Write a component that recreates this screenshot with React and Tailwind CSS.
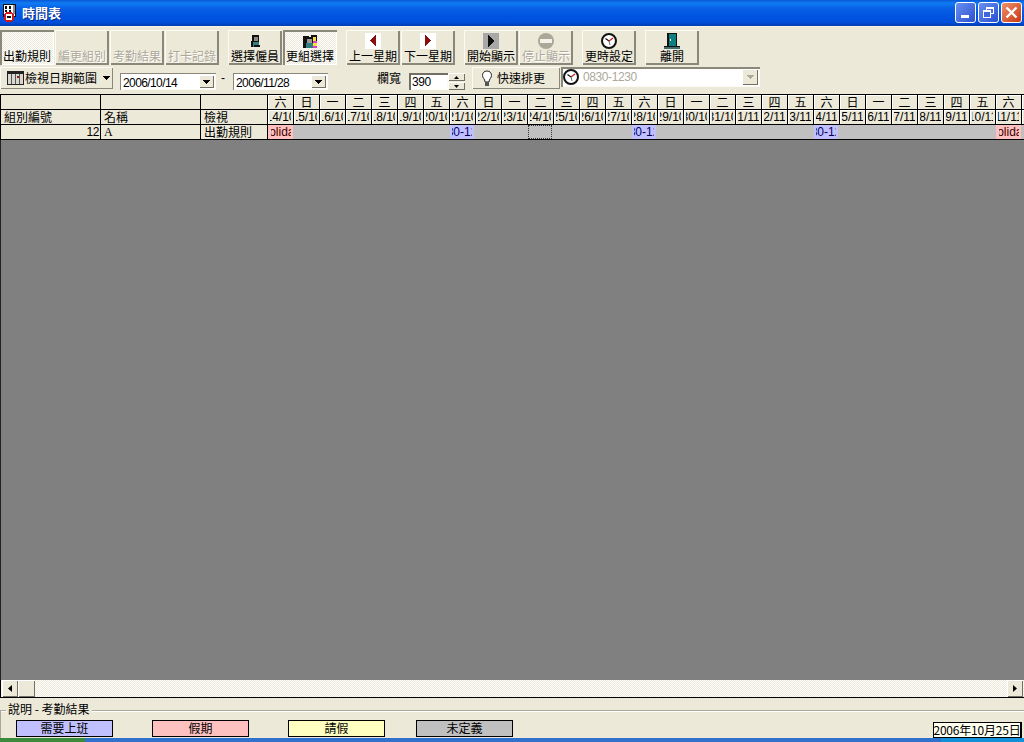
const latin = "font-['Liberation_Sans','Noto_Sans_CJK_TC',sans-serif]";

function AppIcon() {
  return (
    <svg width="17" height="19" viewBox="0 0 17 19" className="mr-[4px] shrink-0" shapeRendering="crispEdges">
      <rect x="2.5" y="0.5" width="12" height="12" fill="#fff" stroke="#111" />
      <rect x="4" y="2" width="2" height="3" fill="#111" />
      <rect x="8" y="2" width="2" height="3" fill="#111" />
      <rect x="4" y="6" width="2" height="2" fill="#111" />
      <rect x="8" y="6" width="2" height="2" fill="#111" />
      <rect x="12" y="1" width="2" height="9" fill="#8a8aa0" />
      <circle cx="8" cy="13" r="4.5" fill="#fff" stroke="#d01818" strokeWidth="2" />
      <rect x="6" y="12" width="4" height="2" fill="#111" />
    </svg>
  );
}
function Person() {
  return (
    <svg width="9" height="12" viewBox="0 0 9 12" shapeRendering="crispEdges">
      <rect x="1" y="0" width="7" height="7" fill="#111" />
      <rect x="3" y="2" width="4" height="4" fill="#8a8a80" />
      <rect x="1" y="7" width="7" height="5" fill="#2f7f7f" />
      <rect x="0" y="6" width="2" height="6" fill="#111" />
      <rect x="3" y="10" width="6" height="2" fill="#111" />
    </svg>
  );
}
function Group() {
  return (
    <svg width="14" height="13" viewBox="0 0 14 13" shapeRendering="crispEdges">
      <rect x="0" y="1" width="6" height="12" fill="#111" />
      <rect x="8" y="0" width="6" height="6" fill="#111" />
      <rect x="9" y="2" width="4" height="4" fill="#f4e040" />
      <rect x="8" y="6" width="6" height="7" fill="#e040c0" />
      <rect x="3" y="2" width="7" height="6" fill="#111" />
      <rect x="4" y="4" width="5" height="4" fill="#9a9a90" />
      <rect x="3" y="8" width="7" height="5" fill="#2f7f7f" />
      <rect x="10" y="8" width="4" height="3" fill="#f4e040" />
    </svg>
  );
}
function ArrowBox({ dir }) {
  return (
    <svg width="16" height="16" viewBox="0 0 16 16" shapeRendering="crispEdges">
      <rect width="16" height="16" fill="#fff" />
      <polygon points={dir === "l" ? "11,2 11,13 5,7.5" : "5,2 5,13 11,7.5"} fill="#8a0f0f" />
    </svg>
  );
}
function Play() {
  return (
    <svg width="16" height="16" viewBox="0 0 16 16" shapeRendering="crispEdges">
      <rect width="16" height="16" fill="#a8a8a8" />
      <polygon points="5,2 5,14 11,8" fill="#111" />
    </svg>
  );
}
function Stop() {
  return (
    <svg width="16" height="16" viewBox="0 0 16 16">
      <circle cx="8" cy="8" r="8" fill="#aca899" />
      <rect x="2" y="6" width="12" height="4" fill="#f4f2e8" />
    </svg>
  );
}
function Clock() {
  return (
    <svg width="16" height="16" viewBox="0 0 16 16">
      <circle cx="8" cy="8" r="7" fill="#fff" stroke="#111" strokeWidth="2" />
      <path d="M8 8 L4.5 5.5" stroke="#111" strokeWidth="1.2" />
      <path d="M8 8 L12 5" stroke="#d01818" strokeWidth="1.2" />
      <path d="M8 8 L9 12" stroke="#666" strokeWidth="1" />
    </svg>
  );
}
function Door() {
  return (
    <svg width="16" height="16" viewBox="0 0 16 16" shapeRendering="crispEdges">
      <rect x="3" y="0" width="10" height="13" fill="#111" />
      <rect x="5" y="1" width="7" height="12" fill="#0f7f7f" />
      <rect x="6" y="6" width="1" height="2" fill="#fff" />
      <rect x="0" y="13" width="16" height="3" fill="#3f6f6f" />
      <rect x="0" y="13" width="16" height="1" fill="#111" />
    </svg>
  );
}
function Bulb() {
  return (
    <svg width="12" height="17" viewBox="0 0 12 17">
      <path d="M6 1 C3 1 1.5 3 1.5 5.5 C1.5 8 4 9 4 12 H8 C8 9 10.5 8 10.5 5.5 C10.5 3 9 1 6 1 Z" fill="#fff" stroke="#222" />
      <rect x="4" y="12" width="4" height="4" fill="#555" />
    </svg>
  );
}
function Calendar() {
  return (
    <svg width="17" height="14" viewBox="0 0 17 14" shapeRendering="crispEdges">
      <rect x="0.5" y="0.5" width="16" height="13" fill="#d8d8d0" stroke="#222" />
      <rect x="1" y="1" width="15" height="2" fill="#222" />
      <rect x="4" y="3" width="1" height="10" fill="#555" />
      <rect x="8" y="3" width="1" height="10" fill="#555" />
      <rect x="12" y="3" width="1" height="10" fill="#555" />
      <rect x="10" y="5" width="2" height="2" fill="#a01818" />
    </svg>
  );
}
function Caret({ color = "#000" }) {
  return (
    <svg width="7" height="4" viewBox="0 0 7 4" shapeRendering="crispEdges">
      <polygon points="0,0 7,0 3.5,4" fill={color} />
    </svg>
  );
}

function ToolButton({ label, icon, active, disabled, w = "w-[54px]" }) {
  const face = active
    ? "shadow-[inset_2px_2px_0_#8a887a,inset_-1px_-1px_0_#fff] bg-[repeating-conic-gradient(#ffffff_0_25%,#ece9d8_0_50%)] bg-[length:2px_2px]"
    : "shadow-[inset_1px_1px_0_#fbfaf4,inset_-2px_-2px_0_#8a887a]";
  const text = disabled ? "text-[#aca899] [text-shadow:1px_1px_0_#fff]" : "text-black";
  return (
    <div className={`${w} h-[35px] shrink-0 flex flex-col items-center justify-end pb-[2px] ${face}`}>
      {icon && <div className="h-[16px] flex items-center justify-center">{icon}</div>}
      <span className={`text-[12px] leading-[14px] whitespace-nowrap ${text}`}>{label}</span>
    </div>
  );
}

function DateCombo({ value, w }) {
  return (
    <div className={`${w} h-[17px] flex items-stretch bg-white shadow-[inset_1px_1px_0_#8a887a,inset_-1px_-1px_0_#fbfaf4] p-[2px]`}>
      <span className={`${latin} flex-1 pl-[1px] pt-[1px] text-[12px] tracking-[-0.6px] leading-[14px] text-black`}>{value}</span>
      <div className="w-[15px] bg-[#ece9d8] shadow-[inset_1px_1px_0_#fff,inset_-1px_-1px_0_#716f64] flex items-center justify-center">
        <Caret />
      </div>
    </div>
  );
}

const weekdays = ["六", "日", "一", "二", "三", "四", "五"];
const dates = [];
for (let d = 14; d <= 31; d++) dates.push(`${d}/10`);
for (let d = 1; d <= 11; d++) dates.push(`${d}/11`);

const rowCells = {
  0: { bg: "bg-[#ffc0c0]", text: "Holiday", color: "text-[#400000]" },
  7: { bg: "bg-[#c0c0ff]", text: "0830-1230", color: "text-[#000060]" },
  14: { bg: "bg-[#c0c0ff]", text: "0830-1230", color: "text-[#000060]" },
  21: { bg: "bg-[#c0c0ff]", text: "0830-1230", color: "text-[#000060]" },
  28: { bg: "bg-[#ffc0c0]", text: "Holiday", color: "text-[#400000]" },
};

const cell = "h-[15px] border-r border-b border-black bg-[#ece9d8] text-[12px] leading-[14px] text-black overflow-hidden whitespace-nowrap";
const bevel = "shadow-[inset_1px_1px_0_#fff]";

function Legend({ label, bg, ml }) {
  return (
    <div className={`${ml} w-[97px] h-[17px] border border-black ${bg} flex justify-center text-[12px] leading-[13px] text-black`}>
      {label}
    </div>
  );
}

export default function App() {
  return (
    <div className="w-[1024px] h-[742px] overflow-hidden flex flex-col bg-[#ece9d8] font-['Noto_Sans_CJK_TC','Liberation_Sans',sans-serif]">
      {/* Title bar */}
      <div className="h-[26px] shrink-0 flex items-center pl-[1px] pr-[2px] bg-[linear-gradient(180deg,#0a57d8_0%,#0f7cf2_12%,#0a62e8_30%,#0053e0_65%,#0050dc_85%,#003cb0_100%)]">
        <AppIcon />
        <span className="text-[13px] font-bold text-white leading-[16px] [text-shadow:1px_1px_0_#0a2a80]">時間表</span>
        <div className="ml-auto -mt-[1px] flex gap-[2px]">
          <div className="w-[21px] h-[21px] rounded-[3px] border border-white bg-[linear-gradient(135deg,#6a90f0,#2a50d0)] flex items-end pl-[5px] pb-[4px]">
            <div className="w-[8px] h-[3px] bg-white" />
          </div>
          <div className="w-[21px] h-[21px] rounded-[3px] border border-white bg-[linear-gradient(135deg,#6a90f0,#2a50d0)] relative">
            <div className="absolute left-[7px] top-[4px] w-[8px] h-[7px] border border-white border-t-2" />
            <div className="absolute left-[4px] top-[7px] w-[8px] h-[8px] border border-white border-t-2 bg-[#3f66dc]" />
          </div>
          <div className="w-[21px] h-[21px] rounded-[3px] border border-white bg-[linear-gradient(135deg,#f0906a,#c83a14)] flex items-center justify-center">
            <svg width="13" height="13" viewBox="0 0 13 13"><path d="M1.5 1.5 L11.5 11.5 M11.5 1.5 L1.5 11.5" stroke="#fff" strokeWidth="2.4" /></svg>
          </div>
        </div>
      </div>

      {/* Toolbar */}
      <div className="h-[68px] shrink-0 pt-[3px] flex flex-col border-t border-[#f6f4ea]">
        <div className="flex">
          <div className="flex gap-[1px]">
            <ToolButton label="出勤規則" active />
            <ToolButton label="編更組別" disabled />
            <ToolButton label="考勤結果" disabled />
            <ToolButton label="打卡記錄" disabled />
          </div>
          <div className="flex gap-[1px] ml-[9px]">
            <ToolButton label="選擇僱員" icon={<Person />} />
            <ToolButton label="更組選擇" icon={<Group />} active />
          </div>
          <div className="flex gap-[1px] ml-[9px]">
            <ToolButton label="上一星期" icon={<ArrowBox dir="l" />} />
            <ToolButton label="下一星期" icon={<ArrowBox dir="r" />} />
          </div>
          <div className="flex gap-[1px] ml-[9px]">
            <ToolButton label="開始顯示" icon={<Play />} />
            <ToolButton label="停止顯示" icon={<Stop />} disabled />
          </div>
          <div className="ml-[9px]">
            <ToolButton label="更時設定" icon={<Clock />} />
          </div>
          <div className="ml-[9px]">
            <ToolButton label="離開" icon={<Door />} />
          </div>
        </div>
        <div className="flex items-start mt-[2px]">
          <div className="w-[113px] h-[22px] flex items-center pl-[7px] shadow-[inset_1px_1px_0_#fbfaf4,inset_-1px_-1px_0_#8a887a]">
            <Calendar />
            <span className="ml-[1px] text-[12px] leading-[14px] text-black whitespace-nowrap">檢視日期範圍</span>
            <span className="ml-[6px] flex"><Caret /></span>
          </div>
          <div className="ml-[7px] mt-[6px]"><DateCombo value="2006/10/14" w="w-[96px]" /></div>
          <span className={`${latin} ml-[5px] mt-[4px] w-[12px] text-[12px] leading-[14px] text-black`}>-</span>
          <div className="mt-[6px]"><DateCombo value="2006/11/28" w="w-[95px]" /></div>
          <span className="ml-[49px] mt-[4px] text-[12px] leading-[14px] text-black whitespace-nowrap">欄寬</span>
          <div className={`${latin} ml-[8px] mt-[6px] w-[39px] h-[17px] bg-white shadow-[inset_2px_2px_0_#716f64,inset_-1px_-1px_0_#fbfaf4] pl-[3px] pt-[2px] text-[12px] tracking-[-0.4px] leading-[14px] text-black`}>390</div>
          <div className="mt-[6px] w-[17px] h-[17px] flex flex-col gap-[1px]">
            <div className="h-[8px] shadow-[inset_1px_1px_0_#fff,inset_-1px_-1px_0_#716f64] flex items-center justify-center"><svg width="5" height="3" viewBox="0 0 5 3"><polygon points="0,3 5,3 2.5,0" fill="#000" /></svg></div>
            <div className="h-[8px] shadow-[inset_1px_1px_0_#fff,inset_-1px_-1px_0_#716f64] flex items-center justify-center"><svg width="5" height="3" viewBox="0 0 5 3"><polygon points="0,0 5,0 2.5,3" fill="#000" /></svg></div>
          </div>
          <div className="ml-[7px] w-[88px] h-[22px] flex items-center pl-[9px] shadow-[inset_1px_1px_0_#fbfaf4,inset_-1px_-1px_0_#8a887a]">
            <Bulb />
            <span className="ml-[4px] text-[12px] leading-[14px] text-black whitespace-nowrap">快速排更</span>
          </div>
          <div className="ml-[1px] w-[199px] h-[20px] flex items-stretch bg-white shadow-[inset_2px_2px_0_#8a887a,inset_-1px_-1px_0_#fbfaf4] p-[2px]">
            <div className="flex items-center"><Clock /></div>
            <span className={`${latin} ml-[4px] flex-1 text-[12px] tracking-[-0.4px] leading-[16px] text-[#aca899]`}>0830-1230</span>
            <div className="w-[16px] bg-[#ece9d8] shadow-[inset_1px_1px_0_#fff,inset_-1px_-1px_0_#716f64] flex items-center justify-center">
              <Caret color="#aca899" />
            </div>
          </div>
        </div>
      </div>

      {/* Grid */}
      <div className={`${latin} shrink-0 w-[1024px] overflow-hidden border-t border-black grid grid-cols-[101px_100px_67px_repeat(30,26px)]`}>
        <div className={`${cell} border-l`} />
        <div className={cell} />
        <div className={cell} />
        {dates.map((d, i) => (
          <div key={`w${i}`} className={`${cell} ${bevel} flex justify-center font-['Noto_Sans_CJK_TC',sans-serif]`}>{weekdays[i % 7]}</div>
        ))}
        <div className={`${cell} ${bevel}`} />

        <div className={`${cell} border-l pl-[3px] font-['Noto_Sans_CJK_TC',sans-serif]`}>組別編號</div>
        <div className={`${cell} pl-[3px] font-['Noto_Sans_CJK_TC',sans-serif]`}>名稱</div>
        <div className={`${cell} pl-[3px] font-['Noto_Sans_CJK_TC',sans-serif]`}>檢視</div>
        {dates.map((d, i) => (
          <div key={`d${i}`} className={`${cell} ${bevel} flex justify-center`}>
            <div className="w-[21px] overflow-hidden flex justify-center">{d}</div>
          </div>
        ))}
        <div className={`${cell} ${bevel}`} />

        <div className={`${cell} border-l text-right pr-[1px] tracking-[-0.4px]`}>12</div>
        <div className={`${cell} pl-[3px] font-['Liberation_Serif',serif]`}>A</div>
        <div className={`${cell} pl-[3px] font-['Noto_Sans_CJK_TC',sans-serif]`}>出勤規則</div>
        {dates.map((d, i) => {
          const c = rowCells[i];
          if (c) {
            return (
              <div key={`c${i}`} className="h-[15px] border-b border-black bg-[#c0c0c0] overflow-hidden">
                <div className={`h-[14px] ${i === 0 || i === 28 ? "w-[25px]" : "w-[24px]"} ${c.bg} ${c.color} flex justify-center whitespace-nowrap text-[12px] leading-[14px]`}>
                  <div className="w-[20px] overflow-hidden flex justify-center">{c.text}</div>
                </div>
              </div>
            );
          }
          return (
            <div key={`c${i}`} className="h-[15px] border-b border-black bg-[#c0c0c0]">
              {i === 10 && <div className="w-[24px] h-[14px] border border-dotted border-[#333]" />}
            </div>
          );
        })}
        <div className="h-[15px] border-b border-black bg-[#c0c0c0]" />
      </div>

      {/* Empty grid body */}
      <div className="flex-1 min-h-0 bg-[#808080] border-l border-[#222]" />

      {/* Scrollbar */}
      <div className="h-[18px] shrink-0 flex border-b border-l border-black pl-[1px] pr-[1px] bg-[repeating-conic-gradient(#ffffff_0_25%,#ece9d8_0_50%)] bg-[length:2px_2px]">
        <div className="w-[16px] h-[17px] bg-[#ece9d8] shadow-[inset_1px_1px_0_#fff,inset_-1px_-1px_0_#716f64] flex items-center justify-center">
          <svg width="4" height="7" viewBox="0 0 4 7"><polygon points="4,0 4,7 0,3.5" fill="#000" /></svg>
        </div>
        <div className="w-[17px] h-[17px] bg-[#ece9d8] shadow-[inset_1px_1px_0_#fff,inset_-1px_-1px_0_#716f64]" />
        <div className="ml-auto w-[16px] h-[17px] bg-[#ece9d8] shadow-[inset_1px_1px_0_#fff,inset_-1px_-1px_0_#716f64] flex items-center justify-center">
          <svg width="4" height="7" viewBox="0 0 4 7"><polygon points="0,0 0,7 4,3.5" fill="#000" /></svg>
        </div>
      </div>

      {/* Legend */}
      <div className="h-[40px] shrink-0 relative pt-[22px]">
        <div className="absolute left-0 right-0 top-[12px] h-[2px] border-t border-[#aca899] border-b-[#fff] border-b" />
        <div className="absolute left-0 top-[12px] w-[1px] h-[28px] bg-[#aca899]" />
        <span className="absolute left-[6px] top-[4px] px-[2px] bg-[#ece9d8] text-[12px] leading-[14px] text-black whitespace-nowrap">說明 - 考勤結果</span>
        <div className="flex">
          <Legend label="需要上班" bg="bg-[#c0c0ff]" ml="ml-[16px]" />
          <Legend label="假期" bg="bg-[#ffc0c0]" ml="ml-[39px]" />
          <Legend label="請假" bg="bg-[#ffffc0]" ml="ml-[39px]" />
          <Legend label="未定義" bg="bg-[#c0c0c0]" ml="ml-[31px]" />
          <div className="ml-auto mr-[2px] mt-[2px] w-[89px] h-[16px] border border-black border-r-2 bg-[#fffff0] flex items-center justify-center text-[12px] tracking-[-0.2px] leading-[14px] text-black whitespace-nowrap">2006年10月25日</div>
        </div>
      </div>

      {/* Taskbar sliver */}
      <div className="h-[4px] shrink-0 flex">
        <div className="w-[85px] bg-[#3c8a3c]" />
        <div className="flex-1 bg-[#2f71cd]" />
        <div className="w-[83px] bg-[#1290d8]" />
      </div>
    </div>
  );
}
